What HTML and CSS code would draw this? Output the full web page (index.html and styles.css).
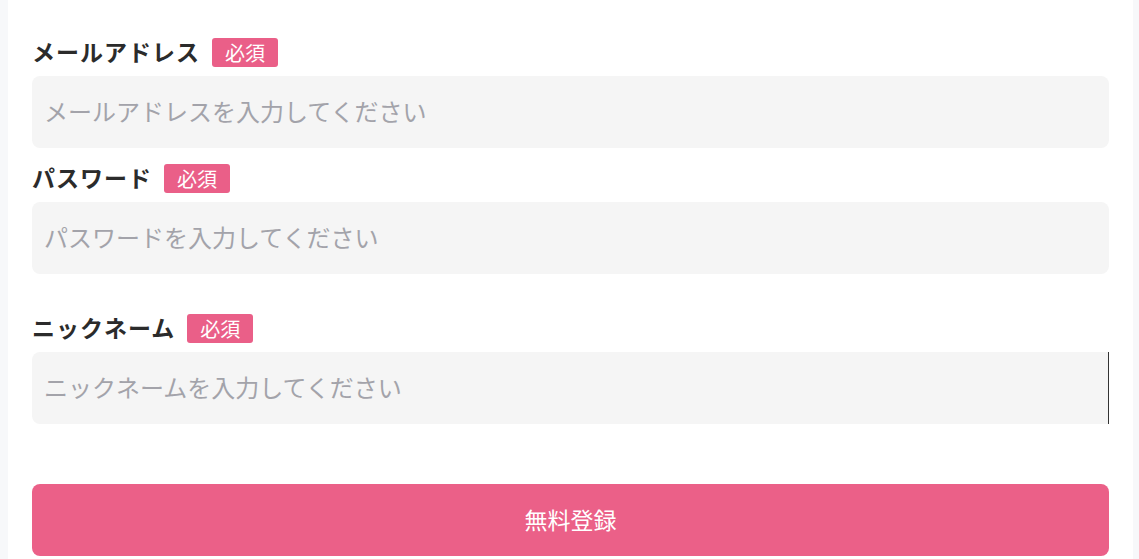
FILE: index.html
```html
<!DOCTYPE html>
<html lang="ja">
<head>
  <meta charset="UTF-8" />
  <meta name="viewport" content="width=device-width, initial-scale=1.0"/>
  <title>無料登録</title>
  <link rel="stylesheet" href="styles.css">
</head>
<body>

  <main class="panel">
    <form class="signup">
      <div class="field">
        <div class="label-row">
          <label for="email">メールアドレス</label>
          <span class="badge">必須</span>
        </div>
        <input type="email" id="email" placeholder="メールアドレスを入力してください" />
      </div>

      <div class="field">
        <div class="label-row">
          <label for="password">パスワード</label>
          <span class="badge">必須</span>
        </div>
        <input type="password" id="password" placeholder="パスワードを入力してください" />
      </div>

      <div class="field field-spaced">
        <div class="label-row">
          <label for="nickname">ニックネーム</label>
          <span class="badge">必須</span>
        </div>
        <input type="text" id="nickname" class="is-active" placeholder="ニックネームを入力してください" />
      </div>

      <button type="submit" class="submit">無料登録</button>
    </form>
  </main>

</body>
</html>
```

FILE: styles.css
```css
body {
  font-family: "Noto Sans CJK JP", "Noto Sans", sans-serif;
  background-color: #f7f8fa;
  color: #333;
  margin: 0;
  padding: 0;
}
.panel {
  background-color: #fff;
  margin: 0 6px 0 8px;
  min-height: 559px;
  box-sizing: border-box;
  padding: 38px 24px 0;
}
.signup {
  display: flex;
  flex-direction: column;
}
.field + .field {
  margin-top: 16px;
}
.field.field-spaced {
  margin-top: 40px;
}
.label-row {
  display: flex;
  align-items: center;
  gap: 12px;
  height: 29px;
  margin-bottom: 9px;
}
.label-row label {
  font-size: 23px;
  line-height: 1;
  font-weight: 700;
  letter-spacing: 1px;
  color: #2b2b2b;
  padding-bottom: 3px;
}
.badge {
  background-color: #ea5f88;
  color: #fff;
  font-size: 20px;
  line-height: 29px;
  height: 29px;
  padding: 0 13px;
  border-radius: 3px;
}
input {
  display: block;
  width: 100%;
  height: 72px;
  box-sizing: border-box;
  padding: 0 12px 4px;
  border: none;
  border-radius: 8px;
  background-color: #f5f5f5;
  font-family: inherit;
  font-size: 24px;
  outline: none;
}
input::placeholder {
  color: #a3a3aa;
}
input.is-active {
  border-right: 1px solid #333;
  border-radius: 8px 0 0 8px;
}
.submit {
  margin-top: 60px;
  height: 72px;
  border: none;
  border-radius: 8px;
  background-color: #eb6088;
  color: #fff;
  font-family: inherit;
  font-size: 23px;
  padding-bottom: 3px;
  cursor: pointer;
}
```
